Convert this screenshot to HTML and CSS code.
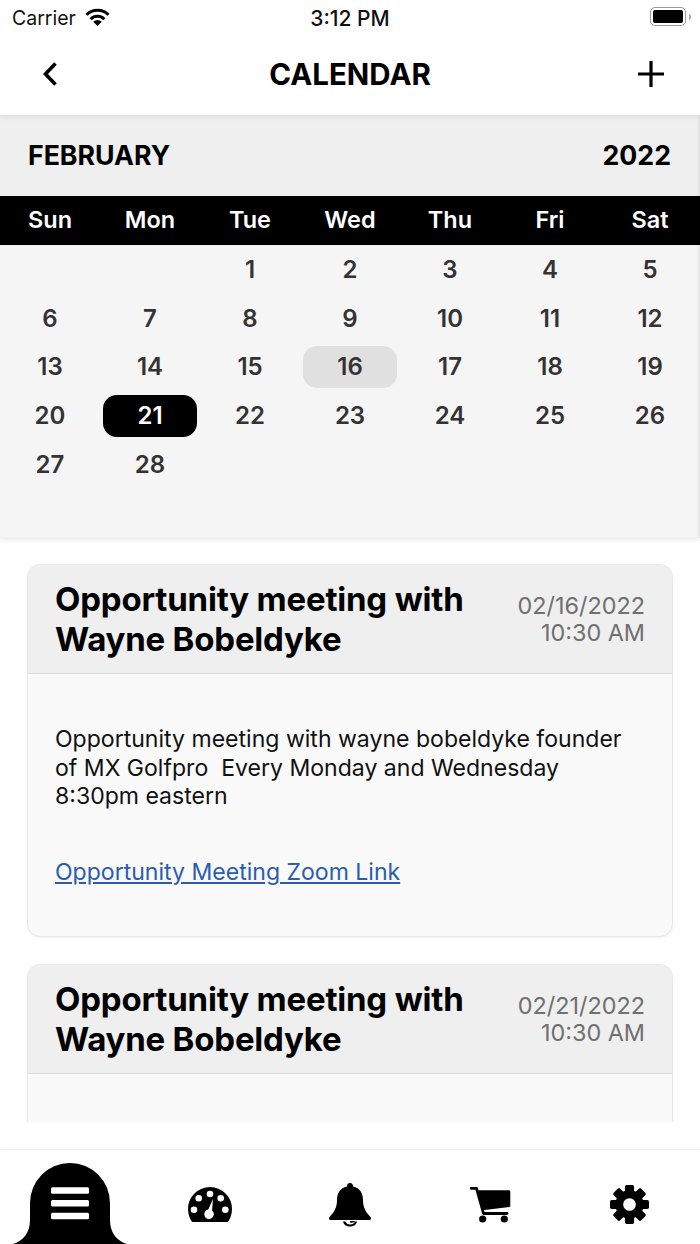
FILE: index.html
```html
<!DOCTYPE html>
<html lang="en">
<head>
<meta charset="utf-8">
<title>Calendar</title>
<link rel="stylesheet" href="styles.css">
</head>
<body>
<div class="app">
  <div class="status">
    <div class="status-left"><span>Carrier</span>
      <svg class="wifi" viewBox="0 0 25 18" width="25" height="18"><path d="M1.500 6.800A15.500 15.500 0 0 1 23.500 6.800M5.700 11.200A9.500 9.500 0 0 1 19.300 11.200" fill="none" stroke="#000" stroke-width="3"/><path d="M12.500 18 8.200 13.700a6 6 0 0 1 8.600 0z"/></svg>
    </div>
    <div class="status-time">3:12 PM</div>
    <div class="status-right">
      <div class="battery"><div class="battery-fill"></div></div><div class="battery-cap"></div>
    </div>
  </div>
  <header class="nav">
    <svg class="nav-icon" viewBox="0 0 24 24" width="24" height="24"><path d="M16.500 1.500 6.500 12l10 10.500" fill="none" stroke="#000" stroke-width="3.600"/></svg>
    <h1 class="nav-title">CALENDAR</h1>
    <svg class="nav-icon" viewBox="0 0 28 28" width="28" height="28"><path d="M14 1v26M1 14h26" fill="none" stroke="#000" stroke-width="3.200"/></svg>
  </header>
  <section class="calendar">
    <div class="month-row"><span>FEBRUARY</span><span>2022</span></div>
    <div class="weekdays">
      <span>Sun</span><span>Mon</span><span>Tue</span><span>Wed</span><span>Thu</span><span>Fri</span><span>Sat</span>
    </div>
    <div class="days">
      <span class="day"></span><span class="day"></span><span class="day">1</span><span class="day">2</span><span class="day">3</span><span class="day">4</span><span class="day">5</span>
      <span class="day">6</span><span class="day">7</span><span class="day">8</span><span class="day">9</span><span class="day">10</span><span class="day">11</span><span class="day">12</span>
      <span class="day">13</span><span class="day">14</span><span class="day">15</span><span class="day event">16</span><span class="day">17</span><span class="day">18</span><span class="day">19</span>
      <span class="day">20</span><span class="day today">21</span><span class="day">22</span><span class="day">23</span><span class="day">24</span><span class="day">25</span><span class="day">26</span>
      <span class="day">27</span><span class="day">28</span>
    </div>
  </section>
  <main class="list">
    <article class="card">
      <div class="card-head">
        <h2 class="card-title">Opportunity meeting with Wayne Bobeldyke</h2>
        <div class="card-date">02/16/2022<br>10:30 AM</div>
      </div>
      <div class="card-body">
        <p class="card-text">Opportunity meeting with wayne bobeldyke founder of MX Golfpro&nbsp; Every Monday and Wednesday 8:30pm eastern</p>
        <a class="card-link" href="#">Opportunity Meeting Zoom Link</a>
      </div>
    </article>
    <article class="card">
      <div class="card-head">
        <h2 class="card-title">Opportunity meeting with Wayne Bobeldyke</h2>
        <div class="card-date">02/21/2022<br>10:30 AM</div>
      </div>
      <div class="card-body">
      </div>
    </article>
  </main>
  <nav class="tabs">
    <div class="tab tab-active">
      <svg class="tab-bell" viewBox="0 0 114 81" width="114" height="81"><path d="M0 81C10 78 17 70 17 57V40a40 40 0 0 1 80 0v17c0 13 7 21 17 24z"/><rect x="38" y="24.300" width="38" height="6.500" rx="1.500" fill="#fff"/><rect x="38" y="37" width="38" height="6.500" rx="1.500" fill="#fff"/><rect x="38" y="49.700" width="38" height="6.500" rx="1.500" fill="#fff"/></svg>
    </div>
    <div class="tab">
      <svg viewBox="0 0 44 35" width="44" height="35"><path fill-rule="evenodd" d="M22 0a22 22 0 0 1 22 22c0 4.500-1.300 8.800-3.600 12.300-.3.500-.7.700-1.200.7H4.800c-.5 0-.9-.2-1.200-.7C1.300 30.800 0 26.500 0 22A22 22 0 0 1 22 0zM22 3.700a3.300 3.300 0 1 0 0 6.600 3.300 3.300 0 0 0 0-6.600zM10.700 8a3.300 3.300 0 1 0 0 6.600 3.300 3.300 0 0 0 0-6.600zM32.700 8a3.300 3.300 0 1 0 0 6.600 3.300 3.300 0 0 0 0-6.600zM6 19.400a3.300 3.300 0 1 0 0 6.600 3.300 3.300 0 0 0 0-6.600zM37.300 19.400a3.300 3.300 0 1 0 0 6.600 3.300 3.300 0 0 0 0-6.600zM24.900 11.900 20.300 22.500a4.800 4.800 0 1 0 3.800 1z"/></svg>
    </div>
    <div class="tab">
      <svg viewBox="0 0 42 44" width="42" height="44"><path d="M21 0c-1.700 0-3 1.300-3 3v.6C11 5 8 10.500 8 17c0 8-3 12-7 16.500-.7.8-1 1.300-1 2 0 .8.7 1.500 1.700 1.500h38.600c1 0 1.700-.7 1.700-1.500 0-.7-.3-1.200-1-2C37 29 34 25 34 17c0-6.500-3-12-10-13.400V3c0-1.700-1.300-3-3-3z"/><path d="M14 38.500c.5 3 3.500 5 7 5s6.500-2 7-5h-2c-.6 1.800-2.500 3-5 3-2 0-3.800-1.200-4.500-3z"/><path d="M21 38h5c-.5 1.300-2.500 2.200-5 1.500z"/></svg>
    </div>
    <div class="tab">
      <svg viewBox="0 0 41 36" width="41" height="36"><path d="M1.300 1.300H6.500L13.500 26.500H37" fill="none" stroke="#000" stroke-width="2.800" stroke-linecap="round" stroke-linejoin="round"/><path d="M8 3.300h31a1.300 1.300 0 0 1 1.300 1.300V19a1 1 0 0 1-1 1L12.500 23.300z"/><circle cx="12.700" cy="32" r="3.600"/><circle cx="34.300" cy="32" r="3.600"/></svg>
    </div>
    <div class="tab tab-gear">
      <svg viewBox="0 0 40 40" width="39" height="39">
        <circle cx="20" cy="20" r="14.500"/>
        <g>
          <rect x="15.300" y="0" width="9.400" height="10" rx="1.800"/>
          <rect x="15.300" y="0" width="9.400" height="10" rx="1.800" transform="rotate(45 20 20)"/>
          <rect x="15.300" y="0" width="9.400" height="10" rx="1.800" transform="rotate(90 20 20)"/>
          <rect x="15.300" y="0" width="9.400" height="10" rx="1.800" transform="rotate(135 20 20)"/>
          <rect x="15.300" y="0" width="9.400" height="10" rx="1.800" transform="rotate(180 20 20)"/>
          <rect x="15.300" y="0" width="9.400" height="10" rx="1.800" transform="rotate(225 20 20)"/>
          <rect x="15.300" y="0" width="9.400" height="10" rx="1.800" transform="rotate(270 20 20)"/>
          <rect x="15.300" y="0" width="9.400" height="10" rx="1.800" transform="rotate(315 20 20)"/>
        </g>
        <circle cx="20" cy="20" r="6.500" fill="#fff"/>
      </svg>
    </div>
  </nav>
</div>
</body>
</html>
```
FILE: styles.css
```css
* { box-sizing: border-box; }
html, body { margin: 0; padding: 0; background: #fff; }
body { font-family: Inter, "Liberation Sans", sans-serif; color: #000; }
.app { width: 700px; height: 1244px; display: flex; flex-direction: column; overflow: hidden; }

.status { height: 36px; flex: none; display: grid; grid-template-columns: 1fr auto 1fr; align-items: center; padding: 0 9px; font-size: 19.500px; color: #111; position: relative; z-index: 2; background: #fff; }
.status-left { display: flex; align-items: center; gap: 9px; padding-left: 3px; }
.wifi { margin-top: -2px; }
.status-time { font-weight: 500; font-size: 21px; }
.status-right { display: flex; justify-content: flex-end; align-items: center; padding-bottom: 3px; }
.battery { width: 36px; height: 19px; border: 1.500px solid #999; border-radius: 5px; padding: 2px; }
.battery-fill { width: 100%; height: 100%; background: #000; border-radius: 2px; }
.battery-cap { width: 2px; height: 6px; background: #aaa; margin-left: 3px; border-radius: 0 2px 2px 0; }

.nav { height: 79px; flex: none; display: flex; align-items: center; justify-content: space-between; padding: 0 35px 3px 39px; position: relative; z-index: 1; box-shadow: 0 1px 6px rgba(0,0,0,.1); background: #fff; }
.nav-title { margin: 0; font-size: 29.500px; font-weight: 700; }

.calendar { flex: none; height: 423px; background: #f5f5f5; box-shadow: 0 1px 6px rgba(0,0,0,.12); position: relative; }
.month-row { height: 81px; background: #efefef; display: flex; justify-content: space-between; align-items: center; padding: 0 29px 2px 28px; font-size: 26.700px; font-weight: 700; box-shadow: inset -3px 0 3px -2px rgba(0,0,0,.1); }
.weekdays { height: 49px; background: #000; color: #fff; display: grid; grid-template-columns: repeat(7, 1fr); align-items: center; justify-items: center; font-size: 23.500px; font-weight: 600; padding-bottom: 2px; }
.days { height: 293px; display: grid; grid-template-columns: repeat(7, 1fr); grid-auto-rows: 41.700px; row-gap: 7px; align-content: start; padding-top: 4px; box-shadow: inset -3px 0 3px -2px rgba(0,0,0,.1); }
.day { display: flex; align-items: center; justify-content: center; margin: 0 3px; border-radius: 14px; font-size: 24px; font-weight: 600; color: #333; padding-bottom: 1px; }
.event { background: #e0e0e0; }
.today { background: #000; color: #fff; }

.list { height: 584px; flex: none; overflow: hidden; padding: 26px 27px 0; margin-bottom: 27px; display: flex; flex-direction: column; gap: 27px; }
.card { flex: none; border: 1px solid #e8e8e8; border-radius: 13px; background: #f9f9f9; box-shadow: 0 1px 3px rgba(0,0,0,.05); overflow: hidden; }
.card-head { height: 109px; background: #efefef; border-bottom: 1px solid #ddd; display: flex; justify-content: space-between; align-items: flex-start; padding: 14px 27px 0; }
.card-title { margin: 0; width: 420px; font-size: 33px; line-height: 40px; font-weight: 700; letter-spacing: -.2px; }
.card-date { text-align: right; font-size: 23.400px; line-height: 27px; color: #707070; margin-top: 13px; white-space: nowrap; }
.card-body { height: 262px; padding: 51px 27px 0; font-size: 23.050px; line-height: 28.500px; color: #111; }
.card-text { margin: 0; width: 580px; }
.card-link { display: block; margin-top: 47px; color: #2a5db0; text-decoration: underline; }

.tabs { flex: 1; min-height: 0; display: grid; grid-template-columns: repeat(5, 1fr); border-top: 1px solid #f2f2f2; background: #fff; box-shadow: 0 -1px 4px rgba(0,0,0,.03); position: relative; }
.tab { display: flex; justify-content: center; align-items: center; padding-top: 15px; }
.tab-active { padding-top: 13px; align-items: flex-start; }
.tab-gear { padding-right: 1px; padding-top: 14px; }
.tab-bell { flex: none; }
```
